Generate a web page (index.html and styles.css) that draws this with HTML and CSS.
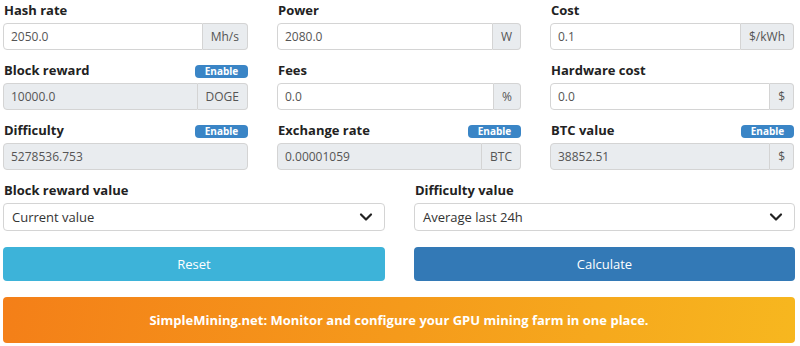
FILE: index.html
```html
<!DOCTYPE html>
<html>
<head>
<meta charset="utf-8">
<link rel="stylesheet" href="styles.css">
</head>
<body>
<div class="calc">
  <div class="grid3">
    <div class="field">
      <div class="label-row"><span class="label">Hash rate</span></div>
      <div class="group"><div class="input">2050.0</div><div class="addon">Mh/s</div></div>
    </div>
    <div class="field">
      <div class="label-row"><span class="label">Power</span></div>
      <div class="group"><div class="input">2080.0</div><div class="addon">W</div></div>
    </div>
    <div class="field">
      <div class="label-row"><span class="label">Cost</span></div>
      <div class="group"><div class="input">0.1</div><div class="addon">$/kWh</div></div>
    </div>

    <div class="field">
      <div class="label-row"><span class="label">Block reward</span><span class="badge">Enable</span></div>
      <div class="group"><div class="input disabled">10000.0</div><div class="addon">DOGE</div></div>
    </div>
    <div class="field">
      <div class="label-row"><span class="label">Fees</span></div>
      <div class="group"><div class="input">0.0</div><div class="addon">%</div></div>
    </div>
    <div class="field">
      <div class="label-row"><span class="label">Hardware cost</span></div>
      <div class="group"><div class="input">0.0</div><div class="addon">$</div></div>
    </div>

    <div class="field">
      <div class="label-row"><span class="label">Difficulty</span><span class="badge">Enable</span></div>
      <div class="group"><div class="input disabled solo">5278536.753</div></div>
    </div>
    <div class="field">
      <div class="label-row"><span class="label">Exchange rate</span><span class="badge">Enable</span></div>
      <div class="group"><div class="input disabled">0.00001059</div><div class="addon">BTC</div></div>
    </div>
    <div class="field">
      <div class="label-row"><span class="label">BTC value</span><span class="badge">Enable</span></div>
      <div class="group"><div class="input disabled">38852.51</div><div class="addon">$</div></div>
    </div>
  </div>

  <div class="grid2">
    <div class="field">
      <div class="label-row"><span class="label">Block reward value</span></div>
      <div class="select"><span>Current value</span>
        <svg class="chev" width="14" height="10" viewBox="0 0 14 10"><path d="M2 2.5 L7 7.5 L12 2.5" fill="none" stroke="#222" stroke-width="2.2" stroke-linecap="round" stroke-linejoin="round"/></svg>
      </div>
    </div>
    <div class="field">
      <div class="label-row"><span class="label">Difficulty value</span></div>
      <div class="select"><span>Average last 24h</span>
        <svg class="chev" width="14" height="10" viewBox="0 0 14 10"><path d="M2 2.5 L7 7.5 L12 2.5" fill="none" stroke="#222" stroke-width="2.2" stroke-linecap="round" stroke-linejoin="round"/></svg>
      </div>
    </div>
  </div>

  <div class="grid2 buttons">
    <div class="btn btn-reset">Reset</div>
    <div class="btn btn-calc">Calculate</div>
  </div>

  <div class="banner">SimpleMining.net: Monitor and configure your GPU mining farm in one place.</div>
</div>
</body>
</html>
```
FILE: styles.css
```css
* { box-sizing: border-box; }
html, body { margin: 0; padding: 0; background: #fff; }
body {
  font-family: "Open Sans", "Noto Sans", sans-serif;
  color: #212529;
  width: 800px;
  height: 346px;
  overflow: hidden;
}
.calc {
  padding: 0 5px 0 3px;
}
.grid3 {
  display: grid;
  grid-template-columns: 245px 244px 244px;
  column-gap: 29px;
  row-gap: 10px;
}
.grid2 {
  display: grid;
  grid-template-columns: 382px 381px;
  column-gap: 29px;
  margin-top: 10px;
}
.label-row {
  height: 23px;
  display: flex;
  align-items: flex-start;
  justify-content: space-between;
  padding-top: 1px;
}
.label {
  font-weight: 700;
  font-size: 13px;
  line-height: 18px;
  color: #222;
  padding-left: 1px;
}
.badge {
  margin-top: 4px;
  height: 13px;
  width: 53px;
  background: #3a85c6;
  color: #fff;
  font-size: 10px;
  font-weight: 700;
  line-height: 13px;
  text-align: center;
  border-radius: 4px;
}
.group {
  display: flex;
  height: 27px;
}
.input {
  flex: 1;
  border: 1px solid #d4d4d4;
  border-radius: 4px 0 0 4px;
  background: #fff;
  color: #555;
  font-size: 12px;
  line-height: 25px;
  padding-left: 7px;
}
.input.disabled { background: #e9ecef; }
.input.solo { border-radius: 4px; }
.addon {
  border: 1px solid #d4d4d4;
  border-left: none;
  border-radius: 0 4px 4px 0;
  background: #e9ecef;
  color: #555;
  font-size: 12px;
  line-height: 25px;
  padding: 0 8px;
}
.select {
  height: 28px;
  border: 1px solid #d4d4d4;
  border-radius: 4px;
  display: flex;
  align-items: center;
  justify-content: space-between;
  padding: 0 11px 0 8px;
  font-size: 13px;
  color: #333;
}
.chev { display: block; }
.buttons { margin-top: 16px; }
.btn {
  height: 34px;
  border-radius: 4px;
  color: #fff;
  font-size: 13px;
  line-height: 34px;
  text-align: center;
}
.btn-reset { background: #3db3d9; }
.btn-calc { background: #3379b6; }
.banner {
  margin-top: 16px;
  height: 46px;
  border-radius: 4px;
  background: linear-gradient(100deg, #f47f18 0%, #f59a1b 50%, #f7b71f 100%);
  color: #fff;
  font-weight: 700;
  font-size: 13px;
  line-height: 46px;
  text-align: center;
}
```
